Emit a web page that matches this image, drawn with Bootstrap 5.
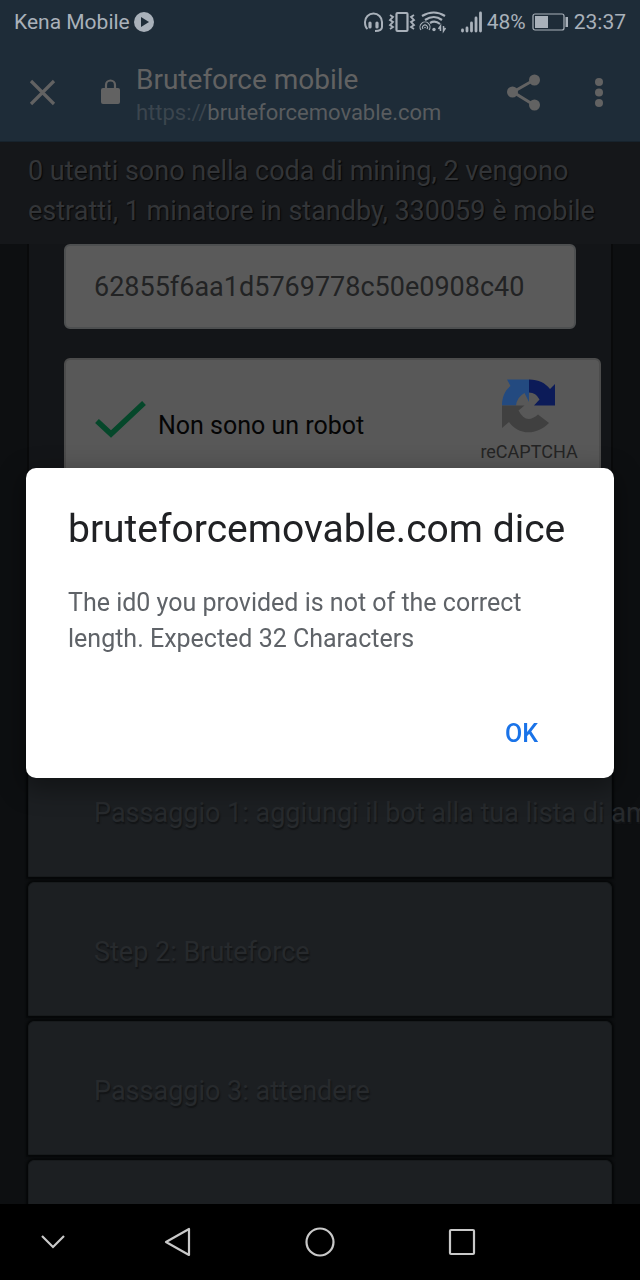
<!DOCTYPE html>
<html lang="it">
<head>
<meta charset="utf-8">
<meta name="viewport" content="width=device-width, initial-scale=1">
<title>Bruteforce mobile</title>
<link href="https://cdn.jsdelivr.net/npm/bootstrap@5.3.0/dist/css/bootstrap.min.css" rel="stylesheet">
<script src="https://cdn.jsdelivr.net/npm/bootstrap@5.3.0/dist/js/bootstrap.bundle.min.js" defer></script>
<style>
  body { font-family: Roboto, "Liberation Sans", sans-serif; background: #0d0f11; color: #5f6163; }
  svg { display: block; flex: none; }
  button.plain { background: none; border: 0; padding: 0; color: inherit; }
  .statusbar { background: #1e2c38; color: #a9b1ba; font-size: 21px; line-height: 44px; padding: 0 14px; }
  .battery { margin: 0 2px; }
  .appbar { background: #1e2c38; color: #626262; height: 98px; border-bottom: 1px solid #17232d; padding: 0 28px; }
  .appbar .close-key { margin-right: 44px; }
  .page-heading { padding-top: 6px; }
  .page-title { font-size: 28px; line-height: 34px; }
  .page-url { font-size: 22px; line-height: 32px; color: #595c5f; }
  .page-url .scheme { color: #3b454e; }
  .queue-note { background: #15171a; color: #333538; font-size: 27px; line-height: 40px; padding: 9px 28px 13px; text-shadow: 1px 1px 1px #060708; }
  .content-area { min-height: 0; }
  .id-panel { margin: 0 27px; height: 499px; background: #131518; border: solid #090a0b; border-width: 0 2px; padding: 0 10px 0 35px; }
  .id-field.form-control { width: auto; height: 85px; margin-right: 25px; background: #5a5a5a; border: 2px solid #4d4f50; border-radius: 6px; color: #222324; font-size: 27px; padding: 0 28px; }
  .captcha-box { height: 156px; margin-top: 29px; background: #585858; border: 2px solid #4c4c4c; border-radius: 6px; color: #050505; font-size: 25px; padding-left: 28px; }
  .captcha-check { padding-bottom: 20px; }
  .captcha-check svg { margin-bottom: 12px; }
  .captcha-logo { width: 140px; font-size: 18px; line-height: 22px; color: #242424; padding-top: 19px; }
  .captcha-terms { font-size: 14px; line-height: 24px; }
  .step-panel { margin: 0 28px 5px; height: 134px; background: #1c1f22; border: 1px solid #171a1c; border-radius: 6px 6px 0 0; color: #272a2d; font-size: 27px; line-height: 40px; padding: 49px 65px 0; text-shadow: 1px 2px 1px #131517; box-shadow: 0 0 2px 2px #060809; white-space: nowrap; }
  .scrim { inset: 44px 0 0; padding-bottom: 78px; }
  .alert-sheet { margin: 0 26px; background: #fff; border-radius: 10px; padding: 37px 42px 14px; box-shadow: 0 8px 24px 4px rgba(0,0,0,.35); }
  .alert-sheet h1 { font-size: 39px; line-height: 48px; font-weight: 400; color: #202124; margin: 0 0 32px; }
  .alert-sheet p { font-size: 25px; line-height: 36px; color: #5f6368; margin: 0 0 47px; }
  .ok-button { color: #1a73e8; font-size: 25px; line-height: 36px; font-weight: 500; padding: 12px 34px; border: 0; }
  .navkeys { background: #000; color: #c9c9c9; height: 76px; display: grid; grid-template-columns: 3fr 4fr 4fr 4fr 3fr; }
</style>
</head>
<body>
<div class="d-flex flex-column vh-100 overflow-hidden">
  <div class="statusbar d-flex align-items-center justify-content-between flex-shrink-0">
    <div class="d-flex align-items-center gap-1">
      <span>Kena Mobile</span>
      <svg width="20" height="20" viewBox="0 0 20 20"><circle cx="10" cy="10" r="10" fill="currentColor"/><path d="M7 5l8 5-8 5z" fill="#1e2c38"/></svg>
    </div>
    <div class="d-flex align-items-center gap-1">
      <svg width="84" height="24" viewBox="0 0 84 24" fill="none" stroke="currentColor">
        <path d="M3.500 19Q1 17 1 12A8.500 8.500 0 0 1 18 12V17Q18 21 11 21" stroke-width="2"/>
        <path d="M6 13v4M13 13v4" stroke-width="3.200" stroke-linecap="round"/>
        <rect x="32.500" y="3" width="11" height="18" rx="1" stroke-width="2.200"/>
        <path d="M26 5l3 2-3 3 3 2-3 3 3 2-3 2M50 5l-3 2 3 3-3 2 3 3-3 2 3 2" stroke-width="1.800"/>
        <path d="M58 6Q70-1 81 6M61 10Q70 4 78 10M66 13Q71 10 76 14" stroke-width="2.200"/>
        <path d="M57 20a5 5 0 1 1 8 0M59 19a2.500 2.500 0 1 1 4 0" stroke-width="1.100"/>
        <circle cx="61" cy="17.500" r=".8" fill="currentColor" stroke="none"/>
        <circle cx="70" cy="19.500" r="1.700" fill="currentColor" stroke="none"/>
        <path d="M76.500 21v-5l-2 3M79.500 16v5l2-3" stroke-width="1.500"/>
      </svg>
      <svg class="ms-2" width="23" height="22" viewBox="0 0 23 22" stroke="currentColor" stroke-width="2.800" stroke-linecap="round"><path d="M2.500 20v-1M7 20v-3M11.500 20v-8M16 20V7M20.500 20V2"/></svg>
      <span>48%</span>
      <svg class="battery" width="36" height="18" viewBox="0 0 36 18"><rect x="1" y="1" width="31" height="16" rx="2" fill="none" stroke="currentColor" stroke-width="1.200"/><path d="M3 3h13v12H3zM33.500 4H36v10h-2.500z" fill="currentColor"/></svg>
      <span>23:37</span>
    </div>
  </div>

  <header class="appbar d-flex align-items-center flex-shrink-0">
    <button class="plain close-key" aria-label="Chiudi">
      <svg width="28" height="28" viewBox="0 0 28 28" stroke="currentColor" stroke-width="3.200"><path d="M3 2l23 23M26 2L3 25"/></svg>
    </button>
    <svg class="me-3" width="20" height="28" viewBox="0 0 20 28"><rect x="1" y="9" width="19" height="16" rx="2" fill="currentColor"/><path d="M6 10V6a4.500 4.500 0 0 1 9 0v4" fill="none" stroke="currentColor" stroke-width="2.200"/></svg>
    <div class="page-heading flex-grow-1">
      <div class="page-title">Bruteforce mobile</div>
      <div class="page-url"><span class="scheme">https://</span>bruteforcemovable.com</div>
    </div>
    <button class="plain me-5" aria-label="Condividi">
      <svg width="36" height="38" viewBox="0 0 36 38"><path d="M28 6L7 18l21 13" fill="none" stroke="currentColor" stroke-width="3"/><g fill="currentColor"><circle cx="28.500" cy="6" r="5.500"/><circle cx="6.500" cy="18" r="5.500"/><circle cx="28.500" cy="31" r="5.500"/></g></svg>
    </button>
    <button class="plain ms-1 me-2" aria-label="Menu">
      <svg width="10" height="32" viewBox="0 0 10 32" fill="currentColor"><circle cx="5" cy="5" r="4"/><circle cx="5" cy="15.500" r="4"/><circle cx="5" cy="26" r="4"/></svg>
    </button>
  </header>

  <div class="queue-note flex-shrink-0">0 utenti sono nella coda di mining, 2 vengono estratti, 1 minatore in standby, 330059 è mobile</div>

  <main class="content-area flex-grow-1 overflow-hidden">
    <section class="id-panel">
      <div class="d-flex"><input class="id-field form-control flex-grow-1" type="text" aria-label="id0" value="62855f6aa1d5769778c50e0908c40"></div>
      <div class="captcha-box d-flex justify-content-between">
        <div class="captcha-check d-flex align-items-center gap-2">
          <svg width="56" height="42" viewBox="0 0 56 42"><path d="M3 22l14 13L50 4" fill="none" stroke="#05472a" stroke-width="5.500"/></svg>
          <span>Non sono un robot</span>
        </div>
        <div class="captcha-logo text-center">
          <svg class="mx-auto mb-2" width="54" height="54" viewBox="0 0 54 54">
            <path d="M0 26.500C0 18 3 11 8.500 7L5 .5H27V23L22.500 14Q15 18 14 26.500z" fill="#234a80"/>
            <path d="M27 .5C37 .5 43 4 48 10l5-5V26.500H32l5.500-6Q34 13.500 27 13.500z" fill="#0c1b58"/>
            <path d="M0 26.500H22.500l-6 5Q24 46 36 35.500L47 44C33 58 15 55 7 43L0 49z" fill="#404040"/>
          </svg>
          reCAPTCHA
          <div class="captcha-terms">Privacy - Termini</div>
        </div>
      </div>
    </section>
    <section class="step-panel">Passaggio 1: aggiungi il bot alla tua lista di amici</section>
    <section class="step-panel">Step 2: Bruteforce</section>
    <section class="step-panel">Passaggio 3: attendere</section>
    <section class="step-panel"></section>
  </main>

  <nav class="navkeys align-items-center flex-shrink-0" aria-label="Tasti di navigazione">
    <button class="plain mx-auto" aria-label="Nascondi"><svg width="26" height="18" viewBox="0 0 26 18" fill="none" stroke="currentColor" stroke-width="2.200"><path d="M2 3l11 11L24 3"/></svg></button>
    <button class="plain mx-auto" aria-label="Indietro"><svg width="28" height="36" viewBox="0 0 28 36" fill="none" stroke="currentColor" stroke-width="2.200" stroke-linejoin="round"><path d="M25 5v26L2 18z"/></svg></button>
    <button class="plain mx-auto" aria-label="Home"><svg width="32" height="32" viewBox="0 0 32 32" fill="none" stroke="currentColor" stroke-width="2.200"><circle cx="16" cy="16" r="13.500"/></svg></button>
    <button class="plain mx-auto" aria-label="Recenti"><svg width="28" height="28" viewBox="0 0 28 28" fill="none" stroke="currentColor" stroke-width="2.200"><rect x="2" y="2" width="24" height="24" rx="1"/></svg></button>
  </nav>
</div>

<div class="scrim position-fixed d-flex flex-column justify-content-center">
  <div class="alert-sheet" role="alertdialog" aria-labelledby="alert-title" aria-describedby="alert-text">
    <h1 id="alert-title">bruteforcemovable.com dice</h1>
    <p id="alert-text">The id0 you provided is not of the correct length. Expected 32 Characters</p>
    <div class="d-flex justify-content-end"><button class="ok-button btn">OK</button></div>
  </div>
</div>
</body>
</html>
